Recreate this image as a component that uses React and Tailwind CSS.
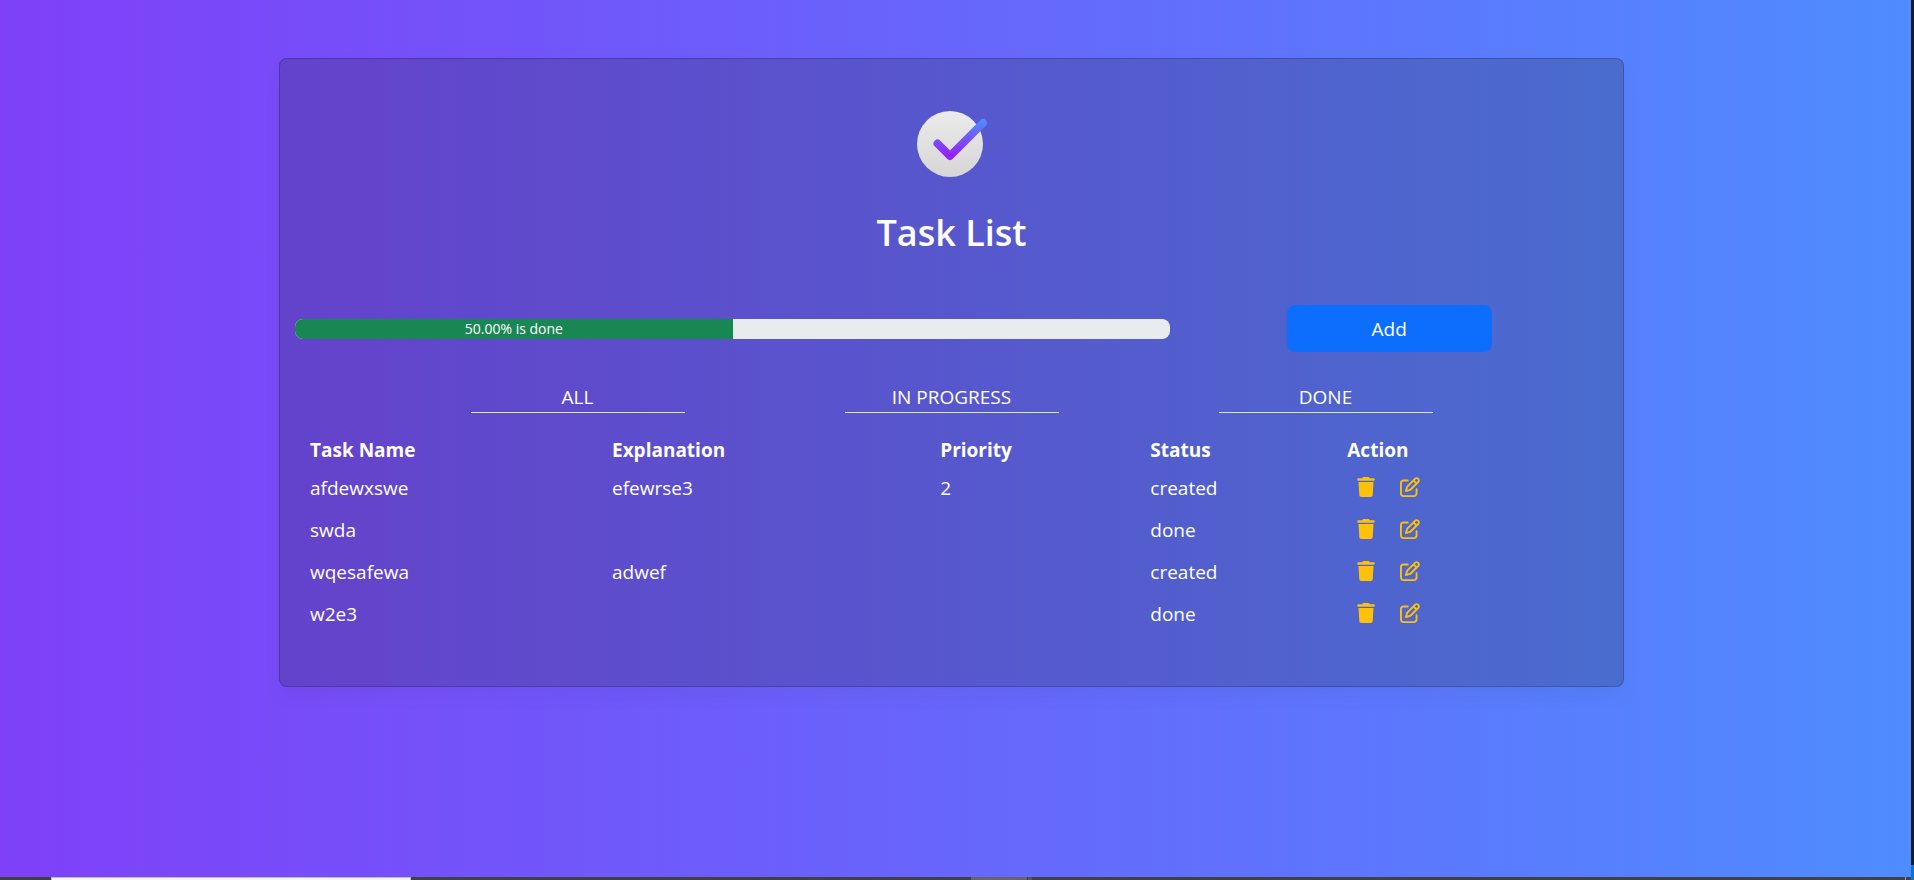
import React from "react";
import { FaTrash, FaRegPenToSquare } from "react-icons/fa6";

const tasks = [
  { name: "afdewxswe", explanation: "efewrse3", priority: "2", status: "created" },
  { name: "swda", explanation: "", priority: "", status: "done" },
  { name: "wqesafewa", explanation: "adwef", priority: "", status: "created" },
  { name: "w2e3", explanation: "", priority: "", status: "done" },
];

const filters = ["ALL", "IN PROGRESS", "DONE"];

function Logo() {
  return (
    <svg width="72" height="68" viewBox="0 0 72 68" aria-hidden="true">
      <defs>
        <linearGradient id="disc" x1="0" y1="0" x2="0" y2="1">
          <stop offset="0" stopColor="#ebebeb" />
          <stop offset="1" stopColor="#d6d6d6" />
        </linearGradient>
        <linearGradient id="tick" gradientUnits="userSpaceOnUse" x1="0" y1="9" x2="0" y2="50">
          <stop offset="0" stopColor="#4b90ff" />
          <stop offset="0.9" stopColor="#9622f3" />
        </linearGradient>
      </defs>
      <circle cx="34" cy="34" r="33" fill="url(#disc)" />
      <path d="M21.5 33.5 L34 46 L67 13" fill="none" stroke="url(#tick)" strokeWidth="8" strokeLinecap="round" strokeLinejoin="round" />
    </svg>
  );
}

function TaskTable() {
  return (
    <table className="mt-[19px] w-full table-fixed text-left">
      <colgroup>
        <col className="w-[23%]" />
        <col className="w-[25%]" />
        <col className="w-[16%]" />
        <col className="w-[15%]" />
        <col />
      </colgroup>
      <thead>
        <tr className="h-[35px] font-bold">
          <th className="pl-[15px]">Task Name</th>
          <th className="pl-[15px]">Explanation</th>
          <th className="pl-[15px]">Priority</th>
          <th className="pl-[15px]">Status</th>
          <th className="pl-[15px]">Action</th>
        </tr>
      </thead>
      <tbody>
        {tasks.map((task) => (
          <tr key={task.name} className="h-[42px]">
            <td className="pl-[15px]">{task.name}</td>
            <td className="pl-[15px]">{task.explanation}</td>
            <td className="pl-[15px]">{task.priority}</td>
            <td className="pl-[15px]">{task.status}</td>
            <td className="pb-0.5 pl-6">
              <div className="flex gap-6 text-[#ffc107]">
                <button type="button" aria-label={`Delete ${task.name}`}>
                  <FaTrash size={20} />
                </button>
                <button type="button" aria-label={`Edit ${task.name}`}>
                  <FaRegPenToSquare size={20} />
                </button>
              </div>
            </td>
          </tr>
        ))}
      </tbody>
    </table>
  );
}

export default function App() {
  return (
    <div className="flex min-h-screen flex-col font-['Open_Sans','Noto_Sans',sans-serif] text-[19px] leading-[30px] text-white">
      <div className="flex grow">
        <main className="flex grow items-start justify-center bg-linear-to-r/srgb from-[#7f40f8] to-[#4f8cff] pt-[58px] pr-2">
          <section className="w-full max-w-[1345px] rounded-lg border border-black/20 bg-[#212529]/22 px-[15px] pt-[51px] pb-[51px] shadow-[0_10px_20px_rgba(0,0,0,0.04)]">
            <div className="flex justify-center">
              <Logo />
            </div>
            <h1 className="mt-[31px] text-center text-4xl/12 font-semibold">Task List</h1>

            <div className="mt-12 grid grid-cols-12 items-center">
              <div className="col-span-8 flex h-5 overflow-hidden rounded-lg bg-[#e9ecef]">
                <div
                  role="progressbar"
                  aria-label="Completed tasks"
                  aria-valuenow={50}
                  aria-valuemin={0}
                  aria-valuemax={100}
                  className="flex w-1/2 items-center justify-center bg-[#198754] text-sm"
                >
                  50.00% is done
                </div>
              </div>
              <button type="button" className="col-span-2 col-start-10 mx-[7px] h-[47px] rounded-lg bg-[#0d6efd]">
                Add
              </button>
            </div>

            <nav className="mt-[30px] flex justify-center gap-40">
              {filters.map((label) => (
                <a key={label} href="#" className="w-[214px] border-b border-[#dee2e6] text-center">
                  {label}
                </a>
              ))}
            </nav>

            <TaskTable />
          </section>
        </main>
        <aside className="flex w-[3px] flex-col bg-[#1b1b1b]">
          <div className="mt-auto h-3 bg-[#0078d4]" />
        </aside>
      </div>
      <footer className="flex h-[3px] bg-[#404142]">
        <div className="ml-[51px] w-[360px] border-x border-t border-[#bbb] bg-[#f5f5f5]" />
        <div className="ml-[560px] w-14 bg-[#666]" />
        <div className="ml-px w-1 bg-[#555]" />
        <div className="mr-[5px] ml-auto w-px bg-[#999]" />
        <div className="w-[3px] bg-[#0078d4]" />
      </footer>
    </div>
  );
}
